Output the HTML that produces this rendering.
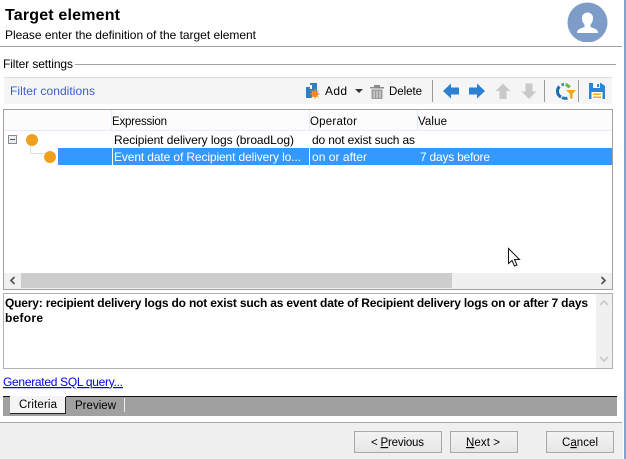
<!DOCTYPE html>
<html><head><meta charset="utf-8"><style>
html,body{margin:0;padding:0;background:#fff;width:626px;height:459px;overflow:hidden}
svg{display:block}
text{font-family:"Liberation Sans",sans-serif;font-size:12px;fill:#000}
.s{font-size:11.5px}
</style></head><body>
<svg width="626" height="459" viewBox="0 0 626 459" xmlns="http://www.w3.org/2000/svg">
<defs><linearGradient id="b" x1="0" y1="0" x2="0" y2="1"><stop offset="0" stop-color="#f3f3f3"/><stop offset="1" stop-color="#e6e6e6"/></linearGradient></defs>
<rect width="626" height="459" fill="#fff"/>
<!-- right window edge -->
<rect x="624" y="0" width="2" height="459" fill="#7ba6d2"/>
<!-- header -->
<text x="5" y="20" textLength="115" style="font-size:16px;font-weight:bold">Target element</text>
<text x="5" y="39" textLength="251">Please enter the definition of the target element</text>
<rect x="0" y="46" width="622" height="1" fill="#a0a0a0"/>
<circle cx="587.500" cy="22.500" r="20" fill="#7d9cc8"/>
<path d="M577 33 C577 29 581 28.500 584.500 27 L584.500 24.500 C582.500 22.500 582 20 582 18 C582 14.500 584.500 12.500 587.500 12.500 C590.500 12.500 593 14.500 593 18 C593 20 592.500 22.500 590.500 24.500 L590.500 27 C594 28.500 598 29 598 33 Z" fill="#fff"/>
<rect x="560" y="42" width="55" height="4" fill="#fff"/>
<!-- group -->
<text x="3" y="68" textLength="70">Filter settings</text>
<rect x="75" y="64" width="541" height="1" fill="#a0a0a0"/>
<!-- toolbar -->
<rect x="4" y="77" width="608" height="27" fill="#f5f5f5"/>
<rect x="4" y="77" width="608" height="1" fill="#dcdcdc"/>
<text x="10" y="95" textLength="85" style="fill:#3a5fc8">Filter conditions</text>
<!-- add icon -->
<path d="M306 91 V87 H310 V83 H317 V92 H312 V98 H306 Z" fill="#2f7fc4"/>
<rect x="310" y="85" width="2" height="4" fill="#fff"/>
<path d="M315 89 V99 M310 94 H320 M311.500 90.500 L318.500 97.500 M318.500 90.500 L311.500 97.500" stroke="#f5a623" stroke-width="1"/>
<circle cx="315" cy="94" r="3.200" fill="#f08a1c"/>
<text x="325" y="95" textLength="22">Add</text>
<path d="M355 89 H363 L359 93 Z" fill="#333"/>
<!-- delete icon -->
<path d="M370 87 H384 V88.500 H370 Z M374 85 H380 V87 H374 Z" fill="#8a8a8a"/>
<path d="M371.500 89.500 H382.500 V99 H371.500 Z" fill="#9a9a9a"/>
<path d="M374 91 V98 M377 91 V98 M380 91 V98" stroke="#e8e8e8" stroke-width="1"/>
<text x="389" y="95" textLength="33" class="s">Delete</text>
<rect x="432" y="80" width="1" height="22" fill="#9a9a9a"/>
<!-- arrows -->
<path d="M443 91 L451 83.500 V87.500 H459 V94.500 H451 V98.500 Z" fill="#2d7fd0"/>
<path d="M485 91 L477 83.500 V87.500 H469 V94.500 H477 V98.500 Z" fill="#2d7fd0"/>
<path d="M503 83.500 L510.500 91 H506.500 V99 H499.500 V91 H495.500 Z" fill="#c9c9c9"/>
<path d="M529 99 L521.500 91.500 H525.500 V83.500 H532.500 V91.500 H536.500 Z" fill="#c9c9c9"/>
<rect x="544" y="80" width="1" height="22" fill="#9a9a9a"/>
<!-- filter/refresh icon -->
<g fill="none" stroke-width="3">
<path d="M559.500 86.500 A6.500 6.500 0 0 0 561 97" stroke="#1f6db0"/>
<path d="M562 97.500 A6.500 6.500 0 0 0 567.500 98" stroke="#2a78b8"/>
<path d="M561.500 85 A6.500 6.500 0 0 1 564 84.500" stroke="#3f9c8c"/>
<path d="M565.500 84.500 A6.500 6.500 0 0 1 569.500 87.500" stroke="#6fb54a"/>
</g>
<path d="M566 90 H576 L572.500 94 V99 L570 98 V94 Z" fill="#f2a31f"/>
<rect x="578" y="80" width="1" height="22" fill="#9a9a9a"/>
<!-- save icon -->
<path d="M589 83 H601 L605 86 V99 H589 Z" fill="#2a86d6"/>
<rect x="593" y="83" width="7" height="5" fill="#fff"/>
<rect x="597" y="84" width="2" height="3" fill="#2a86d6"/>
<rect x="591.500" y="92" width="11" height="7" fill="#fff"/>
<rect x="593" y="93.500" width="8" height="1.500" fill="#f2a31f"/>
<rect x="593" y="96.500" width="8" height="1.500" fill="#f2a31f"/>
<!-- table -->
<rect x="3.500" y="109.500" width="609" height="180" fill="#fff" stroke="#a0a0a0"/>
<rect x="4" y="110" width="608" height="20" fill="#fcfcfc"/>
<rect x="4" y="130" width="608" height="1" fill="#e4ecf5"/>
<rect x="111" y="110" width="1" height="20" fill="#e4ecf5"/>
<rect x="309" y="110" width="1" height="20" fill="#e4ecf5"/>
<rect x="417" y="110" width="1" height="20" fill="#e4ecf5"/>
<text x="112" y="125" textLength="55" class="s">Expression</text>
<text x="310" y="125" textLength="47" class="s">Operator</text>
<text x="418" y="125" textLength="29" class="s">Value</text>
<!-- tree -->
<rect x="8.500" y="135.500" width="8" height="8" fill="#eee" stroke="#8a8a8a"/>
<rect x="10" y="139" width="5" height="1" fill="#345a9a"/>
<path d="M30.500 146 V153.500 H44" fill="none" stroke="#ddd"/>
<circle cx="32" cy="140" r="6" fill="#f0a020"/>
<circle cx="50" cy="157" r="6" fill="#f0a020"/>
<text x="114" y="144" textLength="180">Recipient delivery logs (broadLog)</text>
<text x="312" y="144" textLength="103">do not exist such as</text>
<rect x="58" y="148" width="554" height="17" fill="#3399ff"/>
<rect x="112" y="148" width="1" height="17" fill="#fff"/>
<rect x="309" y="148" width="1" height="17" fill="#fff"/>
<text x="114" y="161" textLength="187" style="fill:#fff">Event date of Recipient delivery lo...</text>
<text x="312" y="161" textLength="55" style="fill:#fff">on or after</text>
<text x="420" y="161" textLength="70" style="fill:#fff">7 days before</text>
<!-- hscroll -->
<rect x="4" y="273" width="608" height="16" fill="#f0f0f0"/>
<rect x="21" y="273" width="431" height="15" fill="#cdcdcd"/>
<path d="M14.500 277 L11 280.500 L14.500 284" fill="none" stroke="#505050" stroke-width="1.600"/>
<path d="M601.500 277 L605 280.500 L601.500 284" fill="none" stroke="#505050" stroke-width="1.600"/>
<!-- cursor -->
<path d="M508.500 248.500 V263.500 L512 260.500 L514.500 266 L517 265 L514.500 259.500 L519.500 259.500 Z" fill="#fff" stroke="#111" stroke-width="1"/>
<!-- query -->
<rect x="3.500" y="293.500" width="609" height="75" fill="#fff" stroke="#b0b0b0"/>
<rect x="596" y="294" width="16" height="74" fill="#f0f0f0"/>
<path d="M600 305 L604 301 L608 305" fill="none" stroke="#c8c8c8" stroke-width="1.600"/>
<path d="M600 357 L604 361 L608 357" fill="none" stroke="#c8c8c8" stroke-width="1.600"/>
<text x="5" y="307" textLength="583" style="font-weight:bold">Query: recipient delivery logs do not exist such as event date of Recipient delivery logs on or after 7 days</text>
<text x="5" y="322" textLength="38" style="font-weight:bold">before</text>
<!-- link -->
<text x="3" y="386" textLength="120" style="fill:#0000ee;text-decoration:underline">Generated SQL query...</text>
<!-- tabs -->
<rect x="3" y="396" width="614" height="20" fill="#a0a0a0"/>
<rect x="3" y="396" width="614" height="1" fill="#111"/>
<rect x="10" y="396" width="56" height="18" fill="#f4f4f4"/>
<rect x="10" y="413" width="56" height="1" fill="#222"/>
<rect x="65" y="397" width="1" height="17" fill="#222"/>
<text x="19" y="408" textLength="38" class="s">Criteria</text>
<text x="75" y="409" textLength="41" class="s">Preview</text>
<rect x="124" y="398" width="1" height="14" fill="#eee"/>
<!-- footer -->
<rect x="0" y="422" width="623" height="37" fill="#f0f0f0"/>
<rect x="0" y="422" width="622" height="1" fill="#a8a8a8"/>
<g fill="url(#b)" stroke="#a8a8a8">
<rect x="354.500" y="431.500" width="87" height="21"/>
<rect x="450.500" y="431.500" width="67" height="21"/>
<rect x="546.500" y="431.500" width="67" height="21"/>
</g>
<text x="371" y="446" textLength="53" class="s">&lt; <tspan text-decoration="underline">P</tspan>revious</text>
<text x="466" y="446" textLength="34" class="s"><tspan text-decoration="underline">N</tspan>ext &gt;</text>
<text x="562" y="446" textLength="36" class="s">C<tspan text-decoration="underline">a</tspan>ncel</text>
</svg>
</body></html>
